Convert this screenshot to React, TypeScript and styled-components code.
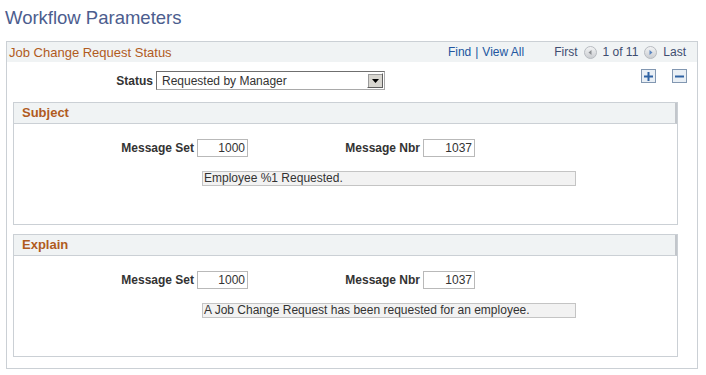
import { FC } from "react";
import styled, { createGlobalStyle } from "styled-components";

const GlobalStyle = createGlobalStyle`
	* {
		box-sizing: border-box;
	}

	body {
		margin: 0;
		background-color: #ffffff;
		font-family: "Liberation Sans", Arial, sans-serif;
		color: #333333;
	}
`;

interface IGroup {
	title: string;
	set: string;
	nbr: string;
	text: string;
}

const groups: IGroup[] = [
	{ title: "Subject", set: "1000", nbr: "1037", text: "Employee %1 Requested." },
	{ title: "Explain", set: "1000", nbr: "1037", text: "A Job Change Request has been requested for an employee." },
];

const NavArrow: FC<{ dir: "prev" | "next" }> = ({ dir }) => (
	<svg width="13" height="13" viewBox="0 0 13 13">
		<defs>
			<linearGradient id={`nav-${dir}`} x1="0" y1="0" x2="0" y2="1">
				<stop offset="0" stopColor="#f4f5f6" />
				<stop offset="1" stopColor="#c9ccd0" />
			</linearGradient>
		</defs>
		<circle cx="6.5" cy="6.5" r="6" fill={`url(#nav-${dir})`} stroke="#b7bbc0" />
		{dir === "prev" ? (
			<path d="M4.5 6.5 L7.5 4 L7.5 9 Z" fill="#8c8f93" />
		) : (
			<path d="M8.5 6.5 L5.5 4 L5.5 9 Z" fill="#5b86c0" />
		)}
	</svg>
);

const App: FC = () => {
	return (
		<>
			<GlobalStyle />
			<Page>
				<Title>Workflow Parameters</Title>

				<Panel>
					<PanelHeader>
						<PanelTitle>Job Change Request Status</PanelTitle>
						<NavBar>
							<NavLinks>
								<LinkText>Find</LinkText>
								<Divider>|</Divider>
								<LinkText>View All</LinkText>
							</NavLinks>
							<Pager>
								<PagerText>First</PagerText>
								<NavArrow dir="prev" />
								<PagerText>1 of 11</PagerText>
								<NavArrow dir="next" />
								<PagerText>Last</PagerText>
							</Pager>
						</NavBar>
					</PanelHeader>

					<StatusRow>
						<StatusLabel>Status</StatusLabel>
						<Select>
							<SelectValue>Requested by Manager</SelectValue>
							<SelectButton>
								<svg width="7" height="4" viewBox="0 0 7 4">
									<path d="M0 0 H7 L3.5 4 Z" fill="#000000" />
								</svg>
							</SelectButton>
						</Select>
						<RowActions>
							<RowButton>
								<svg width="9" height="9" viewBox="0 0 9 9">
									<path d="M3.5 0 H5.5 V3.5 H9 V5.5 H5.5 V9 H3.5 V5.5 H0 V3.5 H3.5 Z" fill="#2f62a3" />
								</svg>
							</RowButton>
							<RowButton>
								<svg width="9" height="9" viewBox="0 0 9 9">
									<path d="M0 3.5 H9 V5.5 H0 Z" fill="#2f62a3" />
								</svg>
							</RowButton>
						</RowActions>
					</StatusRow>

					<GroupList>
						{groups.map((group) => (
							<GroupBox key={group.title}>
								<GroupHeader>{group.title}</GroupHeader>
								<GroupBody>
									<FieldRow>
										<FieldLabel $width={183}>Message Set</FieldLabel>
										<NumberInput $width={51}>{group.set}</NumberInput>
										<FieldLabel $width={175}>Message Nbr</FieldLabel>
										<NumberInput $width={52}>{group.nbr}</NumberInput>
									</FieldRow>
									<DisplayField>{group.text}</DisplayField>
								</GroupBody>
							</GroupBox>
						))}
					</GroupList>
				</Panel>
			</Page>
		</>
	);
};

export default App;

const Page = styled.div`
	width: 706px;
	padding: 5px 8px 0 6px;
`;

const Title = styled.h1`
	margin: 0 0 10px -1px;
	height: 26px;
	font-size: 18.5px;
	font-weight: normal;
	line-height: 26px;
	color: #4c5d8e;
`;

const Panel = styled.div`
	width: 692px;
	height: 328px;
	border: 1px solid #cbd0d5;
`;

const PanelHeader = styled.div`
	height: 20px;
	display: flex;
	align-items: center;
	justify-content: space-between;
	padding: 0 11px 0 2px;
	background-color: #f0f3f4;
`;

const PanelTitle = styled.span`
	font-size: 13px;
	color: #b05b1e;
`;

const NavBar = styled.div`
	display: flex;
	align-items: center;
	gap: 30px;
	font-size: 12px;
`;

const NavLinks = styled.div`
	display: flex;
	align-items: center;
	gap: 4px;
`;

const LinkText = styled.span`
	color: #2256a0;
`;

const Divider = styled.span`
	color: #2256a0;
`;

const Pager = styled.div`
	display: flex;
	align-items: center;
	gap: 6px;

	svg {
		display: block;
	}
`;

const PagerText = styled.span`
	color: #3e4d70;
`;

const StatusRow = styled.div`
	display: flex;
	align-items: center;
	margin-top: 9px;
	padding-right: 10px;
	height: 19px;
`;

const StatusLabel = styled.span`
	width: 146px;
	text-align: right;
	margin-right: 3px;
	font-size: 12px;
	font-weight: bold;
	color: #333333;
`;

const Select = styled.div`
	width: 229px;
	height: 19px;
	display: flex;
	align-items: center;
	justify-content: space-between;
	padding: 0 1px 0 5px;
	border: 1px solid #a9a9a9;
	border-top-color: #6f6f6f;
	border-left-color: #6f6f6f;
	background-color: #ffffff;
`;

const SelectValue = styled.span`
	font-size: 12px;
	color: #333333;
`;

const SelectButton = styled.span`
	width: 16px;
	height: 15px;
	display: flex;
	align-items: center;
	justify-content: center;
	background-color: #d8d6d0;
	border: 1px solid #ffffff;
	border-right-color: #5e5e5e;
	border-bottom-color: #5e5e5e;
	box-shadow: 1px 1px 0 #9b9b9b inset;
`;

const RowActions = styled.div`
	display: flex;
	gap: 16px;
	margin-left: auto;
	align-self: flex-start;
	margin-top: -2px;
`;

const RowButton = styled.span`
	width: 15px;
	height: 14px;
	display: flex;
	align-items: center;
	justify-content: center;
	background-color: #e9eff5;
	border: 1px solid #8297b1;
`;

const GroupList = styled.div`
	display: flex;
	flex-direction: column;
	gap: 9px;
	margin: 12px 0 0 6px;
`;

const GroupBox = styled.div`
	width: 665px;
	border: 1px solid #cbd0d5;
`;

const GroupHeader = styled.div`
	height: 21px;
	padding: 0 0 0 8px;
	font-size: 13px;
	font-weight: bold;
	line-height: 20px;
	color: #b05b1e;
	background-color: #f0f3f4;
	border-bottom: 1px solid #cbd0d5;
	border-right: 2px solid #c2c6cb;
`;

const GroupBody = styled.div`
	height: 100px;
	padding-top: 15px;
`;

const FieldRow = styled.div`
	display: flex;
	align-items: center;
	height: 18px;
`;

const FieldLabel = styled.span<{ $width: number }>`
	width: ${({ $width }) => $width}px;
	padding-right: 3px;
	text-align: right;
	font-size: 12px;
	font-weight: bold;
	color: #333333;
`;

const NumberInput = styled.span<{ $width: number }>`
	width: ${({ $width }) => $width}px;
	height: 18px;
	padding-right: 2px;
	text-align: right;
	font-size: 12px;
	line-height: 16px;
	color: #333333;
	border: 1px solid #b9b9b9;
	background-color: #ffffff;
`;

const DisplayField = styled.div`
	width: 374px;
	height: 15px;
	margin: 14px 0 0 188px;
	padding-left: 1px;
	font-size: 12px;
	line-height: 13px;
	color: #333333;
	background-color: #f2f2f2;
	border: 1px solid #c4c4c4;
`;
